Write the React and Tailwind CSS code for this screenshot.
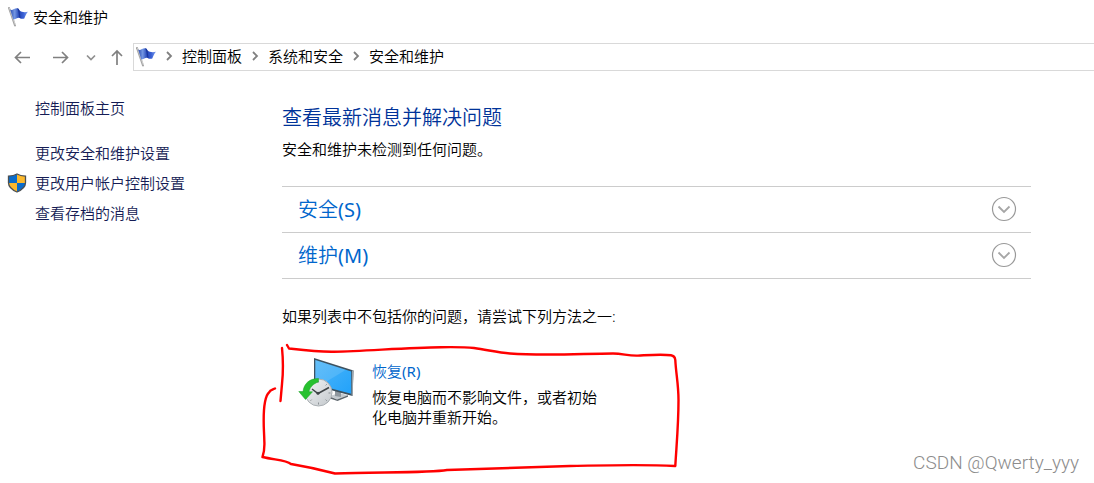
import React from "react";
import clsx from "clsx";

const crumbs = ["控制面板", "系统和安全", "安全和维护"];

const tasks = [
  { id: "settings", label: "更改安全和维护设置" },
  { id: "uac", label: "更改用户帐户控制设置", shield: true },
  { id: "archive", label: "查看存档的消息" },
];

const sections = [
  { id: "security", label: "安全", accessKey: "S" },
  { id: "maintenance", label: "维护", accessKey: "M" },
];

const FlagIcon = () => (
  <svg className="h-5 w-5 shrink-0" viewBox="0 0 20 20" aria-hidden="true">
    <defs>
      <linearGradient id="flag" x1="0" y1="0" x2="1" y2="0">
        <stop offset="0" stopColor="#2c4fb4" />
        <stop offset="0.25" stopColor="#7396e2" />
        <stop offset="0.5" stopColor="#2346b8" />
        <stop offset="0.75" stopColor="#3d63d6" />
        <stop offset="1" stopColor="#7ea0ee" />
      </linearGradient>
    </defs>
    <path d="M1 1 7 18.500" stroke="#a4a4a4" strokeWidth="2" strokeLinecap="round" />
    <path d="M1.400 1 7.400 18" stroke="#dedede" strokeWidth="0.7" />
    <path
      d="M2.200 2.600C4.500 3.800 6.200 1.200 9 1.200c1.300 0 1.800.8 2.500 2.300C13.500 5.200 16.500 5.500 20 4.800c-1.600 1.500-2.300 3.400-3.700 6.700-1.500.7-3.400.3-4.700-.6-2.100-.6-3.700 1.600-6.400 1.700z"
      fill="url(#flag)"
    />
    <path d="M9 1.200c1.300 0 1.800.8 2.500 2.300l1 7.700-1-.4C10.800 7 10.500 3 9 1.200z" fill="#1a369c" />
  </svg>
);

const ShieldIcon = () => (
  <svg className="h-5 w-5 shrink-0" viewBox="0 0 20 20" aria-hidden="true">
    <defs>
      <clipPath id="shield">
        <path d="M10 1c2.500 1.500 5 2 8.500 2.100v6.600c0 4-4 7.300-8.500 9.300-4.500-2-8.500-5.300-8.500-9.300V3.100C5 3 7.500 2.500 10 1z" />
      </clipPath>
    </defs>
    <g clipPath="url(#shield)">
      <path d="M0 0h10v10H0zM10 10h10v10H10z" fill="#0a6ccb" />
      <path d="M10 0h10v10H10zM0 10h10v10H0z" fill="#fdb92c" />
    </g>
    <path
      d="M10 1c2.500 1.500 5 2 8.500 2.100v6.600c0 4-4 7.300-8.500 9.300-4.500-2-8.500-5.300-8.500-9.300V3.100C5 3 7.500 2.500 10 1z"
      fill="none"
      stroke="#4b4f52"
      strokeWidth="1.300"
    />
  </svg>
);

const navPaths = {
  back: "M16 8.500H1.500M7 3 1.500 8.500 7 14",
  forward: "M0 8.500h14.500M9 3l5.500 5.500L9 14",
  recent: "M4 6.500l4 4 4-4",
  up: "M8 16V2M3 7l5-5 5 5",
};

const NavButton = ({ name, label, small }) => (
  <button type="button" aria-label={label} className="flex h-7 w-4 items-center">
    <svg
      className={clsx("h-4 w-4", small ? "text-[#909090]" : "text-[#808080]")}
      viewBox="0 0 16 16"
      fill="none"
      stroke="currentColor"
      strokeWidth="1.700"
    >
      <path d={navPaths[name]} />
    </svg>
  </button>
);

const RecoveryIcon = () => (
  <svg className="h-[52px] w-14 shrink-0" viewBox="0 0 56 52" aria-hidden="true">
    <defs>
      <linearGradient id="screen" x1="0" y1="0" x2="1" y2="1">
        <stop offset="0" stopColor="#4fb6f8" />
        <stop offset="1" stopColor="#22a2fa" />
      </linearGradient>
      <linearGradient id="dial" x1="0" y1="0" x2="1" y2="1">
        <stop offset="0" stopColor="#f4f5f6" />
        <stop offset="1" stopColor="#c3c8cc" />
      </linearGradient>
    </defs>
    <path d="M32 39 41 36l9 2.200-11 4.300z" fill="#c3cacf" />
    <path d="M32 39.500 39 42.500 50 38.200v1.500L39.500 44 32 41.500z" fill="#5e676e" />
    <path d="M37 32l6 2v6l-6-1z" fill="#8f989f" />
    <path d="M16 1 55.500 13.500 54.500 39 16 28.500z" fill="#3d5260" />
    <path d="M17.300 3 53.200 14.500V36.800L17.300 27.200z" fill="url(#screen)" />
    <path d="M17.300 3 48 12.800 22 28.400 17.300 27.200z" fill="#ffffff" fillOpacity="0.12" />
    <path d="M54 13.200 55.500 13.500 54.700 39 53.600 38.500z" fill="#9aa5ad" />
    <circle cx="20.500" cy="35.500" r="13.500" fill="url(#dial)" stroke="#a9afb3" strokeWidth="1" />
    <path
      d="M20 24v2M20.500 45.500v2M30.500 36h2M28.800 27.200l-1.200 1.200M28.800 43.800l-1.200-1.200M12.500 43.800l1.200-1.200"
      stroke="#8b9194"
    />
    <path d="M14 32 20 36.500 31 30.500" fill="none" stroke="#3f4447" strokeWidth="1.500" />
    <circle cx="20" cy="36.300" r="1.500" fill="#3f4447" />
    <path
      d="M20.500 21.500C12 21.500 6 26 5 34.500H.8L7.500 42.500 14.500 34.800H11c.7-4.300 3.800-7.800 9.500-10z"
      fill="#27c12f"
      stroke="#17a020"
      strokeWidth="0.5"
    />
  </svg>
);

// red pen strokes drawn around the recovery entry
const PenMarks = () => (
  <svg
    className="pointer-events-none absolute -left-6 -top-4 h-[136px] w-[424px]"
    viewBox="258 341 424 136"
    fill="none"
    stroke="#ff0000"
    strokeWidth="2.400"
    strokeLinecap="round"
    strokeLinejoin="round"
    aria-hidden="true"
  >
    <path d="M282 348C283 358 283.500 370 282 384L280.500 401" />
    <path d="M287 345 289 348.500C302 350 318 352 334 351.700 366 351 408 347.500 441 347.200 455 347 465 347 474 348 488 350 498 352.500 510 353.500 545 356 585 353.500 613 353.500 623 353.500 628 356 638 355.600 650 355 662 354 671 355.300 674 355.800 675 357 675.300 360 676 374 678.500 384 678.500 400 678.500 425 676.500 445 675.300 466" />
    <path d="M675 466C640 464 600 465.500 570 466 535 466.800 500 468.500 447 470 430 473 380 472 335 473.500 320 469.500 303 466 291 464 286 460 275 460 262.500 457 265 450 264.500 446 264.300 440 264 428 262.500 415 265 402 266 397 267 394 269 392.500 270 390 273 389.500 275 388.500" />
  </svg>
);

const AccessKey = ({ children }) => <span className="font-normal">({children})</span>;

const App = () => (
  <div className="relative min-h-screen overflow-hidden bg-white font-['Noto_Sans','Noto_Sans_CJK_SC',sans-serif] text-[15px] font-[350] leading-5 text-black">
    <header>
      <div className="flex h-[34px] items-center gap-[5px] pl-2">
        <FlagIcon />
        <h1>安全和维护</h1>
      </div>

      <nav className="mt-[9px] flex items-center">
        <div className="flex w-[133px] shrink-0 items-center justify-between pl-[14px] pr-2">
          <NavButton name="back" label="后退" />
          <div className="pl-2">
            <NavButton name="forward" label="前进" />
          </div>
          <div className="flex gap-[10px]">
            <NavButton name="recent" label="最近" small />
            <NavButton name="up" label="上移" />
          </div>
        </div>
        <div className="flex h-7 flex-1 items-center border border-r-0 border-[#d9d9d9] pb-px pl-[2px]">
          <FlagIcon />
          <ol className="flex items-center pb-px">
            {crumbs.map((crumb) => (
              <li key={crumb} className="flex items-center">
                <svg
                  className="mx-[7px] h-3 w-3 text-[#808080]"
                  viewBox="0 0 12 12"
                  fill="none"
                  stroke="currentColor"
                  strokeWidth="1.800"
                >
                  <path d="M4 2l4 4-4 4" />
                </svg>
                <a href="#">{crumb}</a>
              </li>
            ))}
          </ol>
        </div>
      </nav>
    </header>

    <div className="flex">
      <aside className="w-[282px] shrink-0 pt-[22px] leading-[30px] text-[#151c55]">
        <a href="#" className="ml-[35px]">
          控制面板主页
        </a>
        <ul className="mt-[15px]">
          {tasks.map((task) => (
            <li key={task.id} className="flex items-center pl-[7px]">
              <span className="mr-2 w-5">{task.shield && <ShieldIcon />}</span>
              <a href="#">{task.label}</a>
            </li>
          ))}
        </ul>
      </aside>

      <main className="mr-[63px] flex-1 pt-8">
        <h2 className="text-xl leading-[30px] text-[#003399]">查看最新消息并解决问题</h2>
        <p className="mt-[6px]">安全和维护未检测到任何问题。</p>

        <div className="mt-[27px] border-t border-[#cccccc]">
          {sections.map((section) => (
            <button
              key={section.id}
              type="button"
              className="flex h-[46px] w-full items-center justify-between border-b border-[#cccccc] pl-4 pr-[14px] text-xl text-[#0066cc]"
            >
              <span>
                {section.label}
                <AccessKey>{section.accessKey}</AccessKey>
              </span>
              <svg className="mb-px h-[26px] w-[26px]" viewBox="0 0 26 26" fill="none" aria-hidden="true">
                <circle cx="13" cy="13" r="11.500" stroke="#999999" strokeWidth="1.200" />
                <path d="M7.500 10.500 13 16l5.500-5.500" stroke="#a6a6a6" strokeWidth="1.800" />
              </svg>
            </button>
          ))}
        </div>

        <p className="mt-[27px]">如果列表中不包括你的问题，请尝试下列方法之一:</p>

        <section className="relative mt-[31px] flex pl-4">
          <RecoveryIcon />
          <div className="ml-[18px] w-[232px] pt-1">
            <a href="#" className="block text-[#0066cc]">
              恢复<AccessKey>R</AccessKey>
            </a>
            <p className="mt-[6px]">恢复电脑而不影响文件，或者初始化电脑并重新开始。</p>
          </div>
          <PenMarks />
        </section>
      </main>
    </div>

    <footer className="absolute bottom-[10px] right-[15px] font-[Roboto,sans-serif] text-[19px] font-light leading-5 text-[#8c8c8c]">
      CSDN @Qwerty_yyy
    </footer>
  </div>
);

export default App;
